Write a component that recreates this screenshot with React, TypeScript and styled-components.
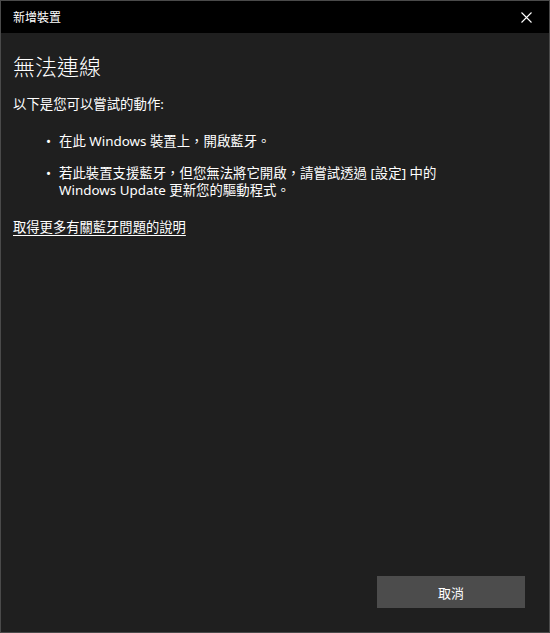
import React from 'react';
import styled, { createGlobalStyle } from 'styled-components';

const GlobalStyle = createGlobalStyle`
  html, body {
    margin: 0;
    padding: 0;
    background: #1f1f1f;
  }
  body {
    font-family: "Noto Sans", "Noto Sans CJK TC", sans-serif;
  }
`;

const Window = styled.div`
  width: 550px;
  height: 633px;
  box-sizing: border-box;
  border: 1px solid #4a4a4a;
  background: #1f1f1f;
  display: flex;
  flex-direction: column;
  color: #ffffff;
`;

const TitleBar = styled.div`
  height: 32px;
  flex-shrink: 0;
  background: #000000;
  display: flex;
  align-items: center;
  justify-content: space-between;
  padding: 0 0 0 12px;

  .title {
    font-size: 12px;
    color: #ffffff;
  }
`;

const CloseButton = styled.button`
  width: 46px;
  height: 32px;
  border: none;
  background: transparent;
  color: #ffffff;
  display: flex;
  align-items: center;
  justify-content: center;
  padding: 0;
  cursor: pointer;
`;

const Content = styled.div`
  flex: 1;
  display: flex;
  flex-direction: column;
  padding: 17px 12px 0 12px;
`;

const Heading = styled.h1`
  margin: 0;
  font-size: 22px;
  font-weight: 300;
  line-height: 32px;
`;

const Paragraph = styled.p`
  margin: 13px 0 0 0;
  font-size: 13.4px;
  line-height: 18px;
`;

const List = styled.ul`
  list-style: none;
  margin: 20px 0 0 0;
  padding: 0 0 0 33px;
  display: flex;
  flex-direction: column;
  gap: 15px;
`;

const Item = styled.li`
  position: relative;
  padding-left: 13px;
  font-size: 13.4px;
  line-height: 17px;

  &::before {
    content: '•';
    position: absolute;
    left: 0;
    top: 0;
  }
`;

const HelpLink = styled.a`
  margin-top: 19px;
  font-size: 13.3px;
  line-height: 18px;
  color: #ffffff;
  text-decoration: underline;
  text-underline-offset: 3px;
  align-self: flex-start;
`;

const Footer = styled.div`
  display: flex;
  justify-content: flex-end;
  padding: 0 24px 24px 0;
`;

const Button = styled.button`
  width: 148px;
  height: 32px;
  border: none;
  background: #4c4c4c;
  color: #ffffff;
  font-family: "Noto Sans", "Noto Sans CJK TC", sans-serif;
  font-size: 13px;
  cursor: pointer;
`;

export default function App() {
  return (
    <>
      <GlobalStyle />
      <Window>
        <TitleBar>
          <span className="title">新增裝置</span>
          <CloseButton aria-label="關閉">
            <svg width="11" height="11" viewBox="0 0 11 11">
              <path d="M0.5 0.5 L10.5 10.5 M10.5 0.5 L0.5 10.5" stroke="#ffffff" strokeWidth="1.1" fill="none" />
            </svg>
          </CloseButton>
        </TitleBar>
        <Content>
          <Heading>無法連線</Heading>
          <Paragraph>以下是您可以嘗試的動作:</Paragraph>
          <List>
            <Item>在此 Windows 裝置上，開啟藍牙。</Item>
            <Item>
              若此裝置支援藍牙，但您無法將它開啟，請嘗試透過 [設定] 中的
              <br />
              Windows Update 更新您的驅動程式。
            </Item>
          </List>
          <HelpLink href="#">取得更多有關藍牙問題的說明</HelpLink>
        </Content>
        <Footer>
          <Button>取消</Button>
        </Footer>
      </Window>
    </>
  );
}
